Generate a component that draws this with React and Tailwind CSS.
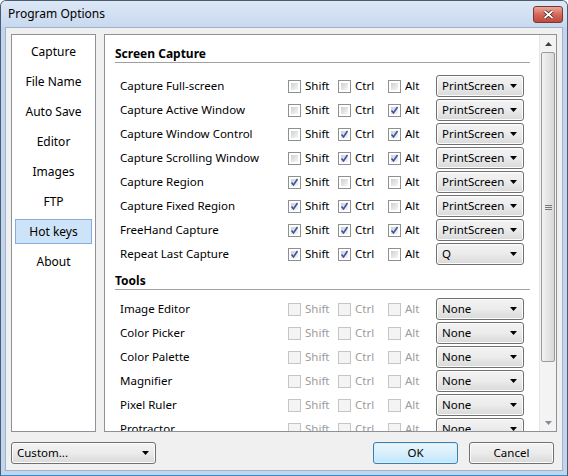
import React from 'react';

const screenRows = [
  { label: 'Capture Full-screen', shift: false, ctrl: false, alt: false, key: 'PrintScreen' },
  { label: 'Capture Active Window', shift: false, ctrl: false, alt: true, key: 'PrintScreen' },
  { label: 'Capture Window Control', shift: false, ctrl: true, alt: true, key: 'PrintScreen' },
  { label: 'Capture Scrolling Window', shift: false, ctrl: true, alt: true, key: 'PrintScreen' },
  { label: 'Capture Region', shift: true, ctrl: false, alt: false, key: 'PrintScreen' },
  { label: 'Capture Fixed Region', shift: true, ctrl: true, alt: false, key: 'PrintScreen' },
  { label: 'FreeHand Capture', shift: true, ctrl: true, alt: true, key: 'PrintScreen' },
  { label: 'Repeat Last Capture', shift: true, ctrl: true, alt: false, key: 'Q' },
];

const toolRows = ['Image Editor', 'Color Picker', 'Color Palette', 'Magnifier', 'Pixel Ruler', 'Protractor'];

const navItems = ['Capture', 'File Name', 'Auto Save', 'Editor', 'Images', 'FTP', 'Hot keys', 'About'];

const Arrow = () => (
  <svg width="7" height="4" viewBox="0 0 7 4" className="shrink-0">
    <polygon points="0,0 7,0 3.5,4" fill="#000" />
  </svg>
);

const Dropdown = ({ value, className = '' }) => (
  <div
    className={`h-[22px] flex items-center justify-between pl-[5px] pr-[6px] rounded-[3px] border border-[#707070] bg-gradient-to-b from-[#f3f3f3] via-[#ebebeb] to-[#d9d9d9] shadow-[inset_0_0_0_1px_#fcfcfc] ${className}`}
  >
    <span>{value}</span>
    <Arrow />
  </div>
);

const Checkbox = ({ checked, disabled, label }) => (
  <div className={`flex items-center gap-[4px] ${disabled ? 'text-[#9c9c9c]' : ''}`}>
    <div
      className={`relative w-[13px] h-[13px] border p-[2px] ${
        disabled ? 'border-[#c5c5c5] bg-[#f4f4f4]' : 'border-[#8e8f8f] bg-white'
      }`}
    >
      <div
        className={`w-full h-full ${
          disabled ? 'bg-[#f4f4f4]' : 'bg-gradient-to-br from-[#cdd1d6] to-[#f5f5f5]'
        }`}
      />
      {checked && (
        <svg width="13" height="13" viewBox="0 0 13 13" className="absolute -left-px -top-px">
          <path d="M3.5 6.5 L5.5 9 L9.5 3" fill="none" stroke="#3a56a0" strokeWidth="1.6" />
        </svg>
      )}
    </div>
    <span>{label}</span>
  </div>
);

const HotkeyRow = ({ label, shift, ctrl, alt, value, disabled }) => (
  <div className="h-[24px] flex items-center pl-[5px]">
    <span className="w-[168px]">{label}</span>
    <div className="w-[50px]">
      <Checkbox checked={shift} disabled={disabled} label="Shift" />
    </div>
    <div className="w-[50px]">
      <Checkbox checked={ctrl} disabled={disabled} label="Ctrl" />
    </div>
    <div className="w-[48px]">
      <Checkbox checked={alt} disabled={disabled} label="Alt" />
    </div>
    <Dropdown value={value} className="w-[88px]" />
  </div>
);

const SectionHeader = ({ title }) => (
  <div className="mr-[9px] h-[18px] border-b border-[#a0a0a0] font-bold leading-[17px] text-[12px]">{title}</div>
);

const ScrollArrow = ({ up }) => (
  <div className="h-[17px] flex items-center justify-center">
    <svg width="7" height="4" viewBox="0 0 7 4">
      <polygon points={up ? '0,4 7,4 3.5,0' : '0,0 7,0 3.5,4'} fill={up ? '#404040' : '#8a8a8a'} />
    </svg>
  </div>
);

export default function App() {
  return (
    <div className="w-[568px] h-[476px] flex flex-col bg-[#c3d5ec] border border-[#4b5b70] border-b-[#2d8fcc] rounded-t-[6px] overflow-hidden font-['Noto_Sans',sans-serif] text-[11.5px] text-black">
      {/* title bar */}
      <div className="h-[26px] flex items-center justify-between pl-[7px] pr-[4px] bg-gradient-to-b from-[#dce8f6] to-[#c8d9ef]">
        <span className="text-[12px]">Program Options</span>
        <div className="w-[30px] h-[17px] flex items-center justify-center rounded-[3px] border border-[#7a3a34] bg-gradient-to-b from-[#e8a79c] via-[#d4685a] to-[#c0493c]">
          <svg width="11" height="9" viewBox="0 0 11 9">
            <path d="M1.5 1 L9.5 8 M9.5 1 L1.5 8" stroke="#3a1a18" strokeWidth="3.2" />
            <path d="M1.5 1 L9.5 8 M9.5 1 L1.5 8" stroke="#fff" strokeWidth="1.8" />
          </svg>
        </div>
      </div>

      {/* client area */}
      <div className="flex-1 mx-[4px] mb-[4px] border border-[#9fb3cc] bg-[#f0f0f0] flex flex-col px-[5px] pt-[6px] pb-[5px]">
        <div className="h-[398px] flex gap-[8px]">
          <div className="w-[85px] bg-white border border-[#8e9198] flex flex-col gap-[5px] px-[3px] pt-[4px]">
            {navItems.map((item) => (
              <div
                key={item}
                className={`h-[25px] flex items-center justify-center text-[12px] ${
                  item === 'Hot keys' ? 'bg-[#cce3f8] border border-[#84acdd]' : ''
                }`}
              >
                {item}
              </div>
            ))}
          </div>

          <div className="flex-1 bg-white border border-[#8e9198] flex overflow-hidden">
            <div className="flex-1 pl-[10px] pt-[10px] overflow-hidden">
              <SectionHeader title="Screen Capture" />
              <div className="mt-[11px]">
                {screenRows.map((r) => (
                  <HotkeyRow key={r.label} label={r.label} shift={r.shift} ctrl={r.ctrl} alt={r.alt} value={r.key} />
                ))}
              </div>
              <div className="mt-[6px]">
                <SectionHeader title="Tools" />
              </div>
              <div className="mt-[7px]">
                {toolRows.map((t) => (
                  <HotkeyRow key={t} label={t} value="None" disabled />
                ))}
              </div>
            </div>

            <div className="w-[17px] flex flex-col bg-[#f3f3f3] border-l border-[#e6e6e6]">
              <ScrollArrow up />
              <div className="h-[310px] mx-[1px] rounded-[2px] border border-[#9a9a9a] bg-gradient-to-r from-[#f2f2f2] to-[#d8d8d8] flex items-center justify-center">
                <div className="w-[7px] h-[5px] flex flex-col justify-between">
                  <div className="h-px bg-[#777]" />
                  <div className="h-px bg-[#777]" />
                  <div className="h-px bg-[#777]" />
                </div>
              </div>
              <div className="flex-1" />
              <ScrollArrow />
            </div>
          </div>
        </div>

        <div className="mt-[10px] flex items-center">
          <Dropdown value="Custom..." className="w-[145px]" />
          <div className="ml-auto mr-[3px] flex gap-[11px]">
            <div className="w-[85px] h-[22px] flex items-center justify-center rounded-[3px] border border-[#3c7fb1] bg-gradient-to-b from-[#eaf6fd] via-[#d9f0fc] to-[#bee6fd] shadow-[inset_0_0_0_1px_#d5eefc]">
              OK
            </div>
            <div className="w-[85px] h-[22px] flex items-center justify-center rounded-[3px] border border-[#707070] bg-gradient-to-b from-[#f3f3f3] via-[#ebebeb] to-[#d9d9d9] shadow-[inset_0_0_0_1px_#fcfcfc]">
              Cancel
            </div>
          </div>
        </div>
      </div>
    </div>
  );
}
